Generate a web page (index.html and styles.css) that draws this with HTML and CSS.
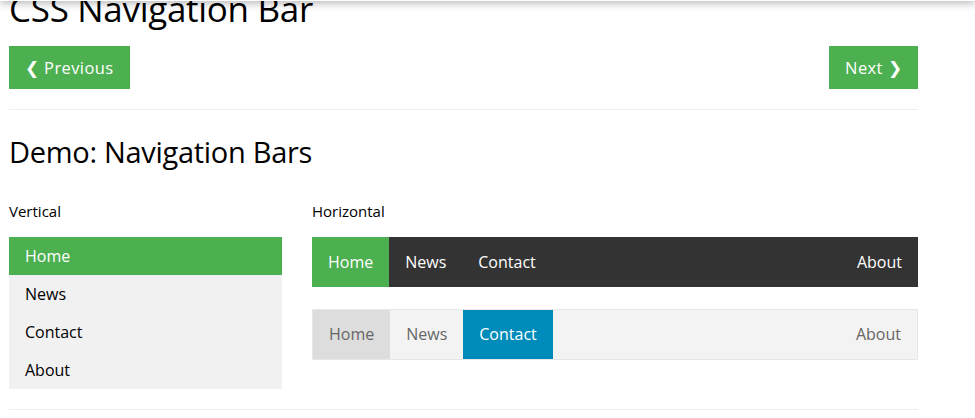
FILE: index.html
```html
<!DOCTYPE html>
<html>
<head>
<meta charset="utf-8">
<link rel="stylesheet" href="styles.css">
</head>
<body>
<div class="topshadow"></div>
<main class="page">
  <h1 class="title">CSS Navigation Bar</h1>
  <div class="pager">
    <a class="btn">&#10094; Previous</a>
    <a class="btn">Next &#10095;</a>
  </div>
  <hr class="rule rule-top">
  <h2 class="demo">Demo: Navigation Bars</h2>
  <div class="row">
    <section class="col-third">
      <p class="label">Vertical</p>
      <ul class="vnav">
        <li class="vitem active">Home</li>
        <li class="vitem">News</li>
        <li class="vitem">Contact</li>
        <li class="vitem">About</li>
      </ul>
    </section>
    <section class="col-twothird">
      <p class="label">Horizontal</p>
      <ul class="hnav dark">
        <li class="hitem active">Home</li>
        <li class="hitem">News</li>
        <li class="hitem">Contact</li>
        <li class="hitem right">About</li>
      </ul>
      <ul class="hnav light">
        <li class="hitem current">Home</li>
        <li class="hitem">News</li>
        <li class="hitem blue">Contact</li>
        <li class="hitem right">About</li>
      </ul>
    </section>
  </div>
  <hr class="rule rule-bottom">
</main>
</body>
</html>
```

FILE: styles.css
```css
html, body {
  margin: 0;
  padding: 0;
  background: #fff;
  overflow: hidden;
}
body {
  font-family: "Open Sans", "Noto Sans", sans-serif;
  color: #000;
}
.topshadow {
  position: fixed;
  top: -10px;
  left: 0;
  right: 0;
  height: 11px;
  background: #fff;
  box-shadow: 0 2px 8px rgba(0,0,0,0.3);
  z-index: 5;
}
.page {
  width: 909px;
  margin-left: 9px;
}
.title {
  font-size: 35px;
  font-weight: 400;
  line-height: 36px;
  margin: -9px 0 0 0;
  letter-spacing: -0.3px;
}
.pager {
  display: flex;
  justify-content: space-between;
  margin-top: 19px;
}
.btn {
  display: block;
  height: 43px;
  line-height: 43px;
  padding: 0 16px;
  background: #4CAF50;
  color: #fff;
  font-size: 16.5px;
  letter-spacing: 0.4px;
}
.rule {
  border: 0;
  border-top: 1px solid #eee;
  margin: 0;
}
.rule-top {
  margin-top: 20px;
}
.demo {
  font-size: 29px;
  font-weight: 400;
  line-height: 36px;
  margin: 24px 0 0 0;
  letter-spacing: -0.3px;
}
.row {
  display: flex;
  margin-top: 31px;
}
.col-third {
  width: 303px;
}
.col-twothird {
  width: 606px;
}
.label {
  margin: 0;
  font-size: 15px;
  line-height: 20px;
}
.vnav, .hnav {
  list-style: none;
  margin: 0;
  padding: 0;
}
.vnav {
  margin-top: 16px;
  width: 273px;
  background: #f1f1f1;
}
.vitem {
  height: 38px;
  line-height: 38px;
  padding: 0 16px;
  font-size: 16px;
}
.vitem.active {
  background: #4CAF50;
  color: #fff;
}
.hnav {
  display: flex;
}
.hnav.dark {
  margin-top: 16px;
  height: 50px;
  background: #333;
  color: #fff;
}
.hnav.light {
  margin-top: 22px;
  height: 49px;
  background: #f3f3f3;
  border: 1px solid #e7e7e7;
  color: #666;
}
.hitem {
  padding: 0 16px;
  line-height: 50px;
  font-size: 16px;
}
.hnav.light .hitem {
  line-height: 49px;
}
.hitem.active {
  background: #4CAF50;
}
.hitem.current {
  background: #ddd;
}
.hitem.blue {
  background: #008CBA;
  color: #fff;
}
.hitem.right {
  margin-left: auto;
}
.rule-bottom {
  margin-top: 20px;
}
```
